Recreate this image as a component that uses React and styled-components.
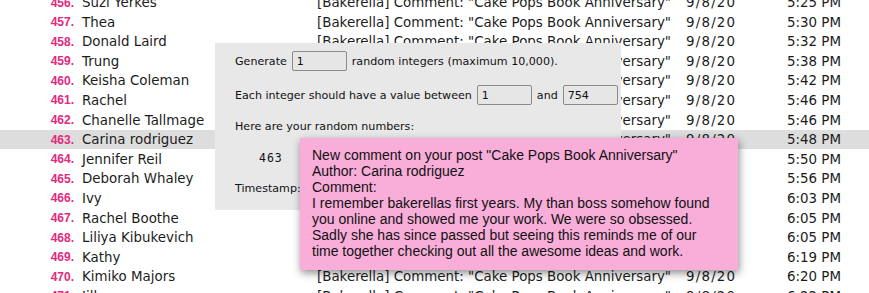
import styled, { createGlobalStyle } from "styled-components";

const GlobalStyle = createGlobalStyle`
    html, body {
        margin: 0;
        padding: 0;
        background: #ffffff;
        overflow: hidden;
    }
`;

const Page = styled.div`
    position: relative;
    width: 869px;
    height: 293px;
    overflow: hidden;
    background: #ffffff;
`;

const List = styled.div`
    margin-top: -7.3px;
    font-family: "DejaVu Sans", sans-serif;
    font-size: 13.4px;
    color: #1c1c1c;
`;

const Row = styled.div`
    display: grid;
    grid-template-columns: 74px 243px 369px 101px 1fr;
    align-items: center;
    height: 19.6px;
    white-space: nowrap;
    background: ${(p) => (p.$selected ? "#dddddd" : "transparent")};
`;

const Num = styled.span`
    text-align: right;
    font-family: "Liberation Sans", Arial, sans-serif;
    font-weight: bold;
    font-size: 12px;
    color: #e3297f;
`;

const Name = styled.span`
    padding-left: 8px;
`;

const Subject = styled.span``;

const DateCell = styled.span`
    letter-spacing: 1.2px;
`;

const TimeCell = styled.span``;

const Panel = styled.div`
    position: absolute;
    left: 215px;
    top: 43px;
    width: 406px;
    height: 167px;
    box-sizing: border-box;
    padding: 8px 0 0 20px;
    background: #e8e8e8;
    font-family: "DejaVu Sans", sans-serif;
    font-size: 11.1px;
    color: #111;
    display: flex;
    flex-direction: column;
`;

const FieldRow = styled.div`
    display: flex;
    align-items: center;
    gap: 5px;
    height: 20px;
    margin-bottom: ${(p) => p.$gap || 0}px;
`;

const Field = styled.div`
    box-sizing: border-box;
    width: 55px;
    height: 20px;
    border: 1px solid #8a8a8a;
    border-radius: 2px;
    padding: 0 4px;
    display: flex;
    align-items: center;
    background: #e6e6e6;
`;

const Line = styled.div`
    height: 14px;
    line-height: 14px;
    margin-bottom: ${(p) => p.$gap || 0}px;
    padding-left: ${(p) => p.$indent || 0}px;
`;

const Mono = styled.span`
    font-family: "DejaVu Sans Mono", monospace;
    font-size: 11.5px;
    letter-spacing: 1px;
`;

const Tooltip = styled.div`
    position: absolute;
    left: 300px;
    top: 138px;
    width: 438px;
    height: 132px;
    box-sizing: border-box;
    padding: 9px 12px 0 12px;
    background: #f8aed9;
    box-shadow: 1px 3px 8px rgba(0, 0, 0, 0.45);
    font-family: "Liberation Sans", Arial, sans-serif;
    font-size: 14px;
    line-height: 16px;
    color: #111;
`;

const TipLine = styled.div`
    white-space: nowrap;
`;

const rows = [
    [456, "Suzi Yerkes", "5:25 PM"],
    [457, "Thea", "5:30 PM"],
    [458, "Donald Laird", "5:32 PM"],
    [459, "Trung", "5:38 PM"],
    [460, "Keisha Coleman", "5:42 PM"],
    [461, "Rachel", "5:46 PM"],
    [462, "Chanelle Tallmage", "5:46 PM"],
    [463, "Carina rodriguez", "5:48 PM"],
    [464, "Jennifer Reil", "5:50 PM"],
    [465, "Deborah Whaley", "5:56 PM"],
    [466, "Ivy", "6:03 PM"],
    [467, "Rachel Boothe", "6:05 PM"],
    [468, "Liliya Kibukevich", "6:05 PM"],
    [469, "Kathy", "6:19 PM"],
    [470, "Kimiko Majors", "6:20 PM"],
    [471, "Jill", "6:22 PM"],
];

const tipLines = [
    'New comment on your post "Cake Pops Book Anniversary"',
    "Author: Carina rodriguez",
    "Comment:",
    "I remember bakerellas first years. My than boss somehow found",
    "you online and showed me your work. We were so obsessed.",
    "Sadly she has since passed but seeing this reminds me of our",
    "time together checking out all the awesome ideas and work.",
];

export default function App() {
    return (
        <Page>
            <GlobalStyle />
            <List>
                {rows.map(([n, name, time]) => (
                    <Row key={n} $selected={n === 463}>
                        <Num>{n}.</Num>
                        <Name>{name}</Name>
                        <Subject>[Bakerella] Comment: "Cake Pops Book Anniversary"</Subject>
                        <DateCell>9/8/20</DateCell>
                        <TimeCell>{time}</TimeCell>
                    </Row>
                ))}
            </List>

            <Panel>
                <FieldRow $gap={14}>
                    Generate <Field>1</Field> random integers (maximum 10,000).
                </FieldRow>
                <FieldRow $gap={15}>
                    Each integer should have a value between <Field>1</Field> and <Field>754</Field>
                </FieldRow>
                <Line $gap={17}>Here are your random numbers:</Line>
                <Line $gap={17} $indent={24}>
                    <Mono>463</Mono>
                </Line>
                <Line>Timestamp:</Line>
            </Panel>

            <Tooltip>
                {tipLines.map((t) => (
                    <TipLine key={t}>{t}</TipLine>
                ))}
            </Tooltip>
        </Page>
    );
}
